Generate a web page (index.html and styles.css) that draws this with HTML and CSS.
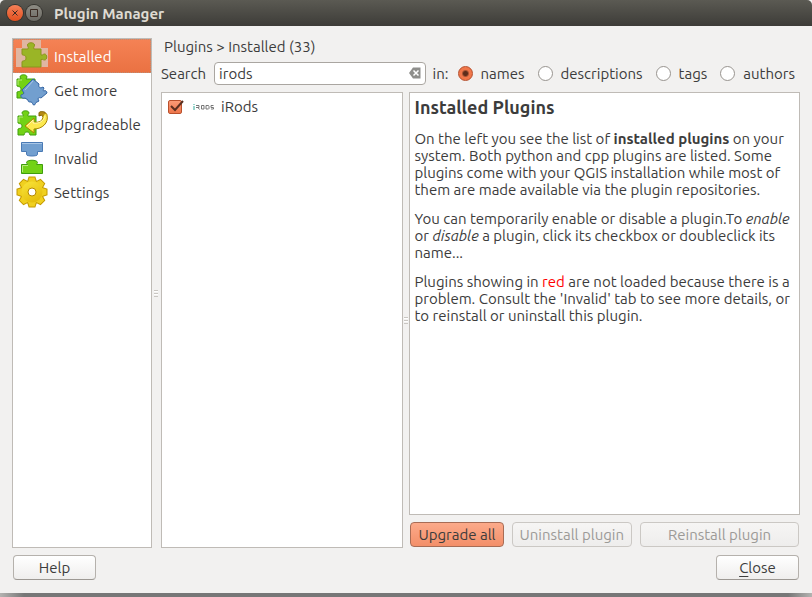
FILE: index.html
```html
<!DOCTYPE html>
<html lang="en">
<head>
<meta charset="utf-8">
<title>Plugin Manager</title>
<link rel="stylesheet" href="styles.css">
</head>
<body>
<div class="window">
  <header class="titlebar">
    <button class="win-button win-close" aria-label="Close window">
      <svg viewBox="0 0 16 16"><path d="M5.500 5.500l5 5M10.500 5.500l-5 5"/></svg>
    </button>
    <button class="win-button" aria-label="Maximize window">
      <svg viewBox="0 0 16 16"><path d="M4.500 4.500h7v7h-7z"/></svg>
    </button>
    <h1>Plugin Manager</h1>
  </header>

  <div class="content">
    <nav class="sidebar">
      <a class="nav-item selected" href="#installed">
        <svg viewBox="0 0 32 32">
          <path d="M6 0h19v8h7v19H0V8h6z" fill="#e0b6a2"/>
          <path d="M6 9h6c1-2-.5-2-.5-4 0-3 7-3 7 0 0 2-1.500 2-.5 4h7v6c2 .5 2-1 3.500-1 3 0 3 6 0 6-1.500 0-1.500-1-3.500-.5v7.500H6v-5c0-2 4 0 4-4s-4-2-4-4z" fill="#9ab526" stroke="#8b941c"/>
        </svg>
        <span>Installed</span>
      </a>
      <a class="nav-item" href="#get-more">
        <svg viewBox="0 0 32 32">
          <path d="M1 5h4c0-1-1-1-1-2 0-3 7-3 7 0 0 1-1 1-1 2h9v19H1v-6c2-1 4 0 4-3s-3-2-4-3z" fill="#73d216" stroke="#3f9d0c"/>
          <path d="M2 11V6h4" fill="none" stroke="#b8ee7c"/>
          <path d="M17 5l6 5c-1 3 1 5 4 3l1 1c-1 2-1 3 0 3 1-1 3 0 3 2l-6 5c-2-1-4 0-2 3l-2 1c-2 0-1 3-3 3s-1-3-3-3-3 0-3-2l-3-2c-2 1-5-1-4-3 1-1 2 0 3-2l-2-3z" fill="#729fcf" stroke="#3465a4"/>
          <path d="M17 7l-8 9" fill="none" stroke="#a9c6e6"/>
        </svg>
        <span>Get more</span>
      </a>
      <a class="nav-item" href="#upgradeable">
        <svg viewBox="0 0 32 32">
          <path d="M2 8h5c1-1-1-2-1-3 0-3 7-3 7 0 0 1-2 2-1 3h8v19h-6c-1-1 0-3-3-3s-2 2-3 3H2v-6c1-1 4 0 4-3s-3-2-4-3z" fill="#73d216" stroke="#3f9d0c"/>
          <path d="M3 14V9h4" fill="none" stroke="#b8ee7c"/>
          <path d="M23 8V5c0-2 7-2 7 1l-3 3c0-2-3-2-4-1z" fill="#b58a16" stroke="#806000"/>
          <path d="M9 18l9-8v4c5 1 9-1 9-6 1-3 4-3 4-1 2 8-5 14-13 14v4z" fill="#fce94f" stroke="#a88400"/>
          <path d="M11 18l6-6v3c6 1 11-2 12-7" fill="none" stroke="#fff7ac"/>
        </svg>
        <span>Upgradeable</span>
      </a>
      <a class="nav-item" href="#invalid">
        <svg viewBox="0 0 32 32">
          <path d="M5.500 0.500h21v9h-5v3c0 2-11 2-11 0v-3h-5z" fill="#729fcf" stroke="#4a7ab5"/>
          <path d="M6 1.500h20" stroke="#a9c6e6"/>
          <path d="M5.500 22.500h6c0-1-1-1-1-2 0-3 11-3 11 0 0 1-1 1-1 2h6v9h-21z" fill="#73d216" stroke="#3f9d0c"/>
          <path d="M6.500 30v-6.500H12" fill="none" stroke="#b8ee7c"/>
        </svg>
        <span>Invalid</span>
      </a>
      <a class="nav-item" href="#settings">
        <svg viewBox="-16 -16 32 32">
          <defs>
            <linearGradient id="gold" gradientUnits="userSpaceOnUse" x1="-8" y1="-14" x2="8" y2="14">
              <stop offset="0" stop-color="#fbe83e"/>
              <stop offset="1" stop-color="#e0b400"/>
            </linearGradient>
            <g id="cog">
              <circle r="11"/>
              <path id="bar" d="M-4-10l1.400-4.500h5.200L4-10v20l-1.400 4.500h-5.200L-4 10z"/>
              <use href="#bar" transform="rotate(45)"/>
              <use href="#bar" transform="rotate(90)"/>
              <use href="#bar" transform="rotate(135)"/>
            </g>
          </defs>
          <use href="#cog" fill="#c49a00" stroke="#c49a00" stroke-width="2"/>
          <use href="#cog" fill="#f0d020"/>
          <circle r="10.500" fill="url(#gold)"/>
          <circle r="4" fill="#fff" stroke="#b58900"/>
        </svg>
        <span>Settings</span>
      </a>
    </nav>

    <div class="splitter"><i class="grip"></i></div>

    <main class="main">
      <p class="breadcrumb">Plugins &gt; Installed (33)</p>
      <form class="search">
        <label for="search">Search</label>
        <div class="search-box">
          <input id="search" type="text" value="irods">
          <button type="button" class="clear" aria-label="Clear">
            <svg viewBox="0 0 12 12"><path d="M4 0.500h7.500v11H4L0 6z" fill="#8e8e8b"/><path d="M4.500 3.500l5 5M9.500 3.500l-5 5" stroke="#fff" stroke-width="1.500"/></svg>
          </button>
        </div>
        <span>in:</span>
        <div class="filters">
          <label><input type="radio" name="field" checked>names</label>
          <label><input type="radio" name="field">descriptions</label>
          <label><input type="radio" name="field">tags</label>
          <label><input type="radio" name="field">authors</label>
        </div>
      </form>

      <div class="panes">
        <section class="plugin-list">
          <label class="plugin">
            <span class="check">
              <input type="checkbox" checked>
              <svg viewBox="0 0 18 16"><path d="M3 7l4 4 8-9" fill="none" stroke="#5a2f20" stroke-width="2"/></svg>
            </span>
            <svg class="logo" viewBox="0 0 21 6" fill="none" stroke="#777">
              <path d="M1 2v4M1 0v1" stroke="#3a9"/>
              <path d="M3 1.500h3v2H3M5 3.500l1.500 2M8.500 1.500h2.500v3.500h-2.500zM13 1.500h2.500l.5 1v2l-.5.5H13zM20.500 1.500H18v2h2.500v1.500H18"/>
            </svg>
            <span>iRods</span>
          </label>
        </section>
        <div class="splitter narrow"><i class="grip"></i></div>
        <section class="details">
          <article class="description">
            <h2>Installed Plugins</h2>
            <p>On the left you see the list of <b>installed plugins</b> on your system. Both python and cpp plugins are listed. Some plugins come with your QGIS installation while most of them are made available via the plugin repositories.</p>
            <p>You can temporarily enable or disable a plugin.To <i>enable</i> or <i>disable</i> a plugin, click its checkbox or doubleclick its name...</p>
            <p>Plugins showing in <span class="red">red</span> are not loaded because there is a problem. Consult the 'Invalid' tab to see more details, or to reinstall or uninstall this plugin.</p>
          </article>
          <div class="actions">
            <button class="button primary">Upgrade all</button>
            <button class="button" disabled>Uninstall plugin</button>
            <button class="button" disabled>Reinstall plugin</button>
          </div>
        </section>
      </div>
    </main>
  </div>

  <footer class="footer">
    <button class="button">Help</button>
    <button class="button"><u>C</u>lose</button>
  </footer>
</div>
</body>
</html>
```
FILE: styles.css
```css
* {
  box-sizing: border-box;
}

body {
  margin: 0;
  background: linear-gradient(90deg, #b4b3b1, #777 24px, #777 calc(100% - 24px), #b4b3b1);
  color: #3c3c3c;
  font: 15px/17px Ubuntu, "Noto Sans", sans-serif;
}

button,
input {
  font: inherit;
  color: inherit;
}

p,
h1,
h2 {
  margin: 0;
}

.window {
  display: flex;
  flex-direction: column;
  min-height: calc(100vh - 4px);
  background: #f2f1f0;
}

.titlebar {
  display: flex;
  align-items: center;
  gap: 3px;
  height: 26px;
  padding: 0 7px;
  border-radius: 5px 5px 0 0;
  background: linear-gradient(#5b5a53, #3d3c38);
  color: #dfdbd2;
}

.titlebar h1 {
  margin-left: 9px;
  font-size: 15px;
}

.win-button {
  width: 16px;
  height: 16px;
  padding: 0;
  border: 0;
  border-radius: 50%;
  background: linear-gradient(#8e8c84, #6b6a64);
  box-shadow: 0 0 0 1px #35342f;
}

.win-close {
  background: linear-gradient(#f58058, #e2501f);
}

.win-button svg {
  display: block;
  fill: none;
  stroke: #3a2a22;
}

.content {
  display: flex;
  flex: 1;
  padding: 12px 12px 0;
}

.sidebar {
  width: 140px;
  border: 1px solid #bfbbb6;
  background: #fff;
}

.nav-item {
  display: flex;
  align-items: center;
  gap: 6px;
  height: 34px;
  padding: 0 3px;
  color: inherit;
  text-decoration: none;
}

.nav-item svg {
  width: 32px;
  height: 32px;
}

.selected {
  outline: 1px dotted #b98e78;
  outline-offset: -1px;
  background: linear-gradient(#f58255, #ea7142);
  color: #fff;
}

.splitter {
  display: flex;
  align-items: center;
  justify-content: center;
  width: 9px;
}

.narrow {
  width: 6px;
}

.grip {
  width: 4px;
  height: 7px;
  margin-right: 2px;
  background: repeating-linear-gradient(#c9c6c2 0 1px, #fff 1px 2px, transparent 2px 3px);
}

.narrow .grip {
  margin: 0;
}

.main {
  display: flex;
  flex: 1;
  flex-direction: column;
  min-width: 0;
}

.breadcrumb {
  padding: 0 3px 6px;
}

.search {
  display: flex;
  align-items: center;
  height: 24px;
}

.search-box {
  position: relative;
  flex: 1;
  margin: 0 7px 0 8px;
}

.search-box input {
  display: block;
  width: 100%;
  height: 23px;
  padding: 0 24px 0 4px;
  border: 1px solid #aaa6a1;
  border-radius: 4px;
  background: #fff;
}

.clear {
  position: absolute;
  top: 5px;
  right: 5px;
  width: 12px;
  height: 12px;
  padding: 0;
  border: 0;
  background: none;
}

.clear svg {
  display: block;
}

.filters {
  display: flex;
  gap: 13px;
  padding: 0 5px 0 9px;
}

.filters label {
  display: flex;
  align-items: center;
  gap: 8px;
}

.filters input {
  width: 15px;
  height: 15px;
  margin: 0;
  appearance: none;
  border: 1px solid #98948f;
  border-radius: 50%;
  background: #fff;
}

.filters input:checked {
  border-color: #b54d2a;
  background: radial-gradient(#5e2d1b 2px, #f0774a 4px);
}

.panes {
  display: flex;
  flex: 1;
  margin-top: 7px;
}

.plugin-list {
  flex: 242 1 0;
  min-width: 0;
  border: 1px solid #bfbbb6;
  background: #fff;
}

.plugin {
  display: flex;
  align-items: center;
  padding: 5px 6px;
}

.check {
  position: relative;
  height: 16px;
  width: 18px;
}

.check input {
  width: 14px;
  height: 14px;
  margin: 1px 0;
  display: block;
  appearance: none;
  border: 1px solid #b9502c;
  border-radius: 2px;
  background: linear-gradient(#fa9a76, #ee764b);
}

.check svg {
  position: absolute;
  inset: 0;
}

.logo {
  width: 21px;
  height: 6px;
  margin: 0 7px;
}

.details {
  display: flex;
  flex: 393 1 0;
  flex-direction: column;
  min-width: 0;
}

.description {
  flex: 1;
  padding: 4px;
  border: 1px solid #bfbbb6;
  background: #fff;
}

.description h2 {
  font-size: 18px;
  line-height: 21px;
}

.description p {
  margin-top: 12px;
}

.red {
  color: #f00;
}

.actions {
  display: flex;
  gap: 8px;
  padding: 7px 1px 1px;
}

.button {
  height: 25px;
  padding: 0 7px;
  border: 1px solid #b5b1ac;
  border-bottom-color: #9c9893;
  border-radius: 4px;
  background: linear-gradient(#fff, #efeeed);
  white-space: nowrap;
}

.button:disabled {
  border-color: #cbc8c4;
  background: linear-gradient(#f6f5f4, #eeedec);
  color: #9c9a97;
}

.actions .button:last-child {
  flex: 1;
}

.button.primary {
  border-color: #a86c55;
  background: linear-gradient(#fcaa8a, #f38f69);
}

.footer {
  display: flex;
  justify-content: space-between;
  padding: 7px 13px 13px;
}

.footer .button {
  width: 83px;
}

u {
  text-underline-offset: 3px;
}
```
